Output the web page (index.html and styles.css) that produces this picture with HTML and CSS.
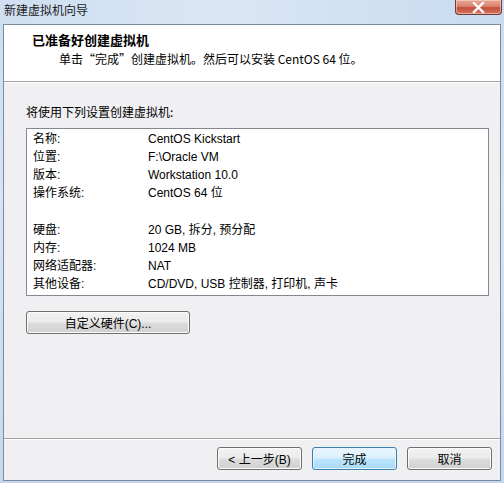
FILE: index.html
```html
<!DOCTYPE html>
<html lang="zh-CN">
<head>
<meta charset="utf-8">
<title>新建虚拟机向导</title>
<link rel="stylesheet" href="styles.css">
</head>
<body>
<div class="window">
  <div class="titlebar">
    <span class="title">新建虚拟机向导</span>
    <button class="close" aria-label="关闭">
      <svg width="13" height="11" viewBox="0 0 13 11"><path d="M2 1 L11 10 M11 1 L2 10" stroke="#fff" stroke-width="2.4" stroke-linecap="square"/></svg>
    </button>
  </div>
  <div class="client">
    <div class="header">
      <div class="h-title">已准备好创建虚拟机</div>
      <div class="h-sub">单击“完成”创建虚拟机。然后可以安装 CentOS 64 位。</div>
    </div>
    <div class="body">
      <div class="intro">将使用下列设置创建虚拟机:</div>
      <div class="summary">
        <div class="row"><span class="k">名称:</span><span class="v">CentOS Kickstart</span></div>
        <div class="row"><span class="k">位置:</span><span class="v">F:\Oracle VM</span></div>
        <div class="row"><span class="k">版本:</span><span class="v">Workstation 10.0</span></div>
        <div class="row"><span class="k">操作系统:</span><span class="v">CentOS 64 位</span></div>
        <div class="row gap"></div>
        <div class="row"><span class="k">硬盘:</span><span class="v">20 GB, 拆分, 预分配</span></div>
        <div class="row"><span class="k">内存:</span><span class="v">1024 MB</span></div>
        <div class="row"><span class="k">网络适配器:</span><span class="v">NAT</span></div>
        <div class="row"><span class="k">其他设备:</span><span class="v">CD/DVD, USB 控制器, 打印机, 声卡</span></div>
      </div>
      <button class="btn custom">自定义硬件(C)...</button>
    </div>
    <div class="footer">
      <button class="btn nav">&lt; 上一步(B)</button>
      <button class="btn nav primary">完成</button>
      <button class="btn nav">取消</button>
    </div>
  </div>
</div>
</body>
</html>
```

FILE: styles.css
```css
* { box-sizing: border-box; }

html, body {
  margin: 0;
  padding: 0;
}

body {
  width: 504px;
  height: 483px;
  overflow: hidden;
  font-family: "Liberation Sans", "Noto Sans CJK SC", sans-serif;
  font-size: 12px;
  color: #000;
}

.window {
  width: 504px;
  height: 483px;
  display: flex;
  flex-direction: column;
  background: linear-gradient(to bottom, #c9dcf1 0%, #d6e5f5 40%, #c4d8ee 100%);
  padding: 0 3px 2px 3px;
}

.titlebar {
  height: 24px;
  flex: none;
  display: flex;
  justify-content: space-between;
  align-items: flex-start;
  background: linear-gradient(to right, #cfdff1 0%, #d9e6f5 45%, #c8dbf0 100%);
  margin: 0 -3px;
  padding: 0 2px 0 4px;
}

.title {
  font-family: "Noto Sans CJK SC", sans-serif;
  font-size: 12px;
  line-height: 12px;
  margin-top: 4px;
  color: #1a1a1a;
}

.close {
  width: 47px;
  height: 15px;
  border: 1px solid #6e3a3a;
  border-top: none;
  border-radius: 0 0 4px 4px;
  background: linear-gradient(to bottom, #e8a896 0%, #d9826e 45%, #c2503c 55%, #d47560 100%);
  box-shadow: inset 0 0 0 1px rgba(255, 220, 210, 0.55);
  display: flex;
  align-items: center;
  justify-content: center;
  padding: 0;
}

.client {
  flex: 1;
  display: flex;
  flex-direction: column;
  background: #f0eff1;
  border: 1px solid #7d8a99;
}

.header {
  height: 57px;
  flex: none;
  background: #fff;
  border-bottom: 1px solid #a0a0a0;
  box-shadow: 0 1px 0 #fff;
  padding: 7px 0 0 28px;
  font-family: "Noto Sans CJK SC", sans-serif;
}

.h-title {
  font-weight: bold;
  font-size: 13px;
  line-height: 16px;
}

.h-sub {
  margin: 3px 0 0 27px;
  font-size: 12px;
  line-height: 16px;
}

.body {
  flex: 1;
  padding: 22px 0 0 22px;
}

.intro {
  font-family: "Noto Sans CJK SC", sans-serif;
  line-height: 16px;
}

.summary {
  margin-top: 8px;
  width: 463px;
  height: 168px;
  background: #fff;
  border: 1px solid #828790;
  padding: 1px 0 0 6px;
}

.row {
  display: flex;
  height: 18px;
  line-height: 18px;
}

.row.gap { height: 19px; }

.k {
  width: 115px;
  flex: none;
}

.btn {
  font-family: "Liberation Sans", "Noto Sans CJK SC", sans-serif;
  font-size: 12px;
  color: #000;
  height: 23px;
  padding: 0;
  border: 1px solid #707070;
  border-radius: 3px;
  background: linear-gradient(to bottom, #f2f2f2 0%, #ebebeb 48%, #dddddd 52%, #cfcfcf 100%);
  box-shadow: inset 0 0 0 1px #fcfcfc;
}

.custom {
  margin-top: 15px;
  width: 164px;
}

.footer {
  height: 42px;
  flex: none;
  border-top: 1px solid #a0a0a0;
  box-shadow: inset 0 1px 0 #fff;
  display: flex;
  justify-content: flex-end;
  align-items: flex-start;
  gap: 10px;
  padding: 8px 8px 0 0;
}

.nav {
  width: 85px;
}

.primary {
  border-color: #3c7fb1;
  background: linear-gradient(to bottom, #eaf6fd 0%, #d9f0fc 48%, #bee6fd 52%, #a7d9f5 100%);
  box-shadow: inset 0 0 0 1px #e5f4fc;
}
```
